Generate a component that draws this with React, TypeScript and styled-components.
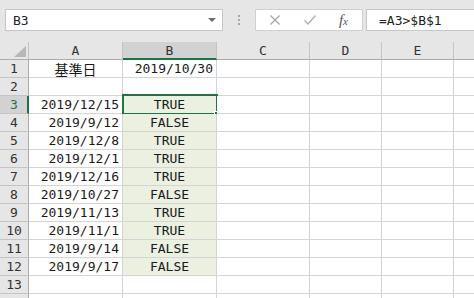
import { FC } from 'react';
import styled, { createGlobalStyle } from 'styled-components';

const GREEN = '#217346';
const GRID = '#d4d4d4';
const HEAD_LINE = '#c4c4c4';
const CELL_FONT = `"DejaVu Sans Mono", "Noto Sans CJK JP", monospace`;

// widths include the 1px right border of each column; the last one runs past the window
const COLS = ['A', 'B', 'C', 'D', 'E', ''];
const COL_WIDTHS = '29px 94px 94px 93px 72px 72px 72px';

type Align = 'left' | 'center' | 'right';

interface RowData {
  a?: string;
  b?: string;
  aAlign?: Align;
  bAlign?: Align;
}

const rows: RowData[] = [
  { a: '基準日', aAlign: 'center', b: '2019/10/30', bAlign: 'right' },
  {},
  { a: '2019/12/15', b: 'TRUE' },
  { a: '2019/9/12', b: 'FALSE' },
  { a: '2019/12/8', b: 'TRUE' },
  { a: '2019/12/1', b: 'TRUE' },
  { a: '2019/12/16', b: 'TRUE' },
  { a: '2019/10/27', b: 'FALSE' },
  { a: '2019/11/13', b: 'TRUE' },
  { a: '2019/11/1', b: 'TRUE' },
  { a: '2019/9/14', b: 'FALSE' },
  { a: '2019/9/17', b: 'FALSE' },
  {},
];

const GlobalStyle = createGlobalStyle`
  html, body {
    margin: 0;
    padding: 0;
    background: #ffffff;
    overflow: hidden;
  }
`;

export default function App() {
  return (
    <>
      <GlobalStyle />
      <Page>
        <FormulaBar>
          <NameBox>
            <span>B3</span>
            <Caret />
          </NameBox>
          <Grip>
            <i />
            <i />
            <i />
          </Grip>
          <ActionBox>
            <svg width='12' height='12' viewBox='0 0 12 12'>
              <path d='M1.5 1.5 L10.5 10.5 M10.5 1.5 L1.5 10.5' stroke='#a6a6a6' strokeWidth='1.3' fill='none' />
            </svg>
            <svg width='14' height='12' viewBox='0 0 14 12'>
              <path d='M1.5 6.5 L5 10 L12.5 1.5' stroke='#b0b0b0' strokeWidth='1.4' fill='none' />
            </svg>
            <Fx>
              f<small>x</small>
            </Fx>
          </ActionBox>
          <FormulaInput>=A3&gt;$B$1</FormulaInput>
        </FormulaBar>
        <Sheet>
          <Corner>
            <svg width='12' height='11' viewBox='0 0 12 11'>
              <path d='M12 0 L12 11 L0 11 Z' fill='#b8b8b8' />
            </svg>
          </Corner>
          {COLS.map((c, i) => (
            <ColHeader key={i} $active={c === 'B'}>
              {c}
            </ColHeader>
          ))}
          {rows.map((r, i) => {
            const n = i + 1;
            return <Row key={n} n={n} data={r} filled={n >= 3 && n <= 12} />;
          })}
          {/* row 14 only peeks in at the bottom edge */}
          <Row n={14} data={{}} filled={false} hideLabel />
        </Sheet>
      </Page>
    </>
  );
}

interface RowProps {
  n: number;
  data: RowData;
  filled: boolean;
  hideLabel?: boolean;
}

const Row: FC<RowProps> = ({ n, data, filled, hideLabel }) => (
  <>
    <RowHeader $active={n === 3}>{hideLabel ? '' : n}</RowHeader>
    <Cell $align={data.aAlign || 'right'} $cjk={data.aAlign === 'center'}>
      {data.a}
    </Cell>
    <Cell $align={data.bAlign || 'center'} $filled={filled}>
      {data.b}
      {n === 3 && (
        <Selection>
          <Handle />
        </Selection>
      )}
    </Cell>
    <Cell />
    <Cell />
    <Cell />
    <Cell />
  </>
);

const Page = styled.div`
  width: 474px;
  height: 298px;
  overflow: hidden;
  background: #ffffff;
`;

const FormulaBar = styled.div`
  height: 42px;
  background: #e6e6e6;
  display: flex;
  align-items: flex-start;
  padding: 9px 0 0 5px;
  box-sizing: border-box;
`;

const NameBox = styled.div`
  width: 218px;
  height: 22px;
  box-sizing: border-box;
  background: #ffffff;
  border: 1px solid #c6c6c6;
  display: flex;
  align-items: center;
  justify-content: space-between;
  padding: 0 6px 0 7px;
  font-family: ${CELL_FONT};
  font-size: 13px;
  color: #222;
`;

const Caret = styled.span`
  width: 0;
  height: 0;
  border-left: 4px solid transparent;
  border-right: 4px solid transparent;
  border-top: 4px solid #6a6a6a;
`;

const Grip = styled.div`
  width: 32px;
  height: 22px;
  display: flex;
  flex-direction: column;
  align-items: center;
  justify-content: center;
  gap: 2px;

  & i {
    width: 2px;
    height: 2px;
    background: #a8a8a8;
  }
`;

const ActionBox = styled.div`
  width: 108px;
  height: 22px;
  box-sizing: border-box;
  background: #ffffff;
  border: 1px solid #d0d0d0;
  display: flex;
  align-items: center;
  padding: 0 14px 0 13px;
  justify-content: space-between;
`;

const Fx = styled.span`
  font-family: 'Liberation Serif', serif;
  font-style: italic;
  font-size: 15px;
  color: #555;
  line-height: 1;

  & small {
    font-size: 11px;
  }
`;

const FormulaInput = styled.div`
  flex: 1;
  height: 22px;
  margin-left: 3px;
  box-sizing: border-box;
  background: #ffffff;
  border: 1px solid #c6c6c6;
  border-right: none;
  display: flex;
  align-items: center;
  padding-left: 12px;
  font-family: ${CELL_FONT};
  font-size: 13px;
  color: #222;
`;

const Sheet = styled.div`
  display: grid;
  grid-template-columns: ${COL_WIDTHS};
  grid-auto-rows: 18px;
  font-family: ${CELL_FONT};
  font-size: 13px;
  color: #1a1a1a;
`;

const Corner = styled.div`
  background: #e6e6e6;
  border-right: 1px solid ${HEAD_LINE};
  border-bottom: 1px solid #ababab;
  box-sizing: border-box;
  display: flex;
  align-items: flex-end;
  justify-content: flex-end;
  padding: 0 2px 2px 0;
`;

const ColHeader = styled.div<{ $active?: boolean }>`
  box-sizing: border-box;
  background: ${(p) => (p.$active ? '#d2d2d2' : '#e6e6e6')};
  border-right: 1px solid ${HEAD_LINE};
  border-bottom: ${(p) => (p.$active ? `2px solid ${GREEN}` : '1px solid #ababab')};
  display: flex;
  align-items: center;
  justify-content: center;
  padding-top: ${(p) => (p.$active ? '1px' : '0')};
  color: #333;
`;

const RowHeader = styled.div<{ $active?: boolean }>`
  box-sizing: border-box;
  background: ${(p) => (p.$active ? '#d2d2d2' : '#e6e6e6')};
  border-right: ${(p) => (p.$active ? `2px solid ${GREEN}` : `1px solid #ababab`)};
  border-bottom: 1px solid ${HEAD_LINE};
  display: flex;
  align-items: center;
  justify-content: center;
  padding-left: ${(p) => (p.$active ? '1px' : '0')};
  color: ${(p) => (p.$active ? GREEN : '#333')};
`;

const Cell = styled.div<{ $align?: Align; $filled?: boolean; $cjk?: boolean }>`
  position: relative;
  box-sizing: border-box;
  background: ${(p) => (p.$filled ? '#ebf0e0' : '#ffffff')};
  border-right: 1px solid ${GRID};
  border-bottom: 1px solid ${GRID};
  display: flex;
  align-items: center;
  justify-content: ${(p) =>
    p.$align === 'center' ? 'center' : p.$align === 'left' ? 'flex-start' : 'flex-end'};
  padding: 0 3px 0 3px;
  font-size: ${(p) => (p.$cjk ? '14px' : '13px')};
  white-space: nowrap;
`;

const Selection = styled.div`
  position: absolute;
  left: -1px;
  top: -2px;
  right: -2px;
  bottom: -2px;
  border: 2px solid ${GREEN};
  pointer-events: none;
`;

const Handle = styled.div`
  position: absolute;
  right: -5px;
  bottom: -5px;
  width: 5px;
  height: 5px;
  background: ${GREEN};
  border: 1px solid #ffffff;
`;
